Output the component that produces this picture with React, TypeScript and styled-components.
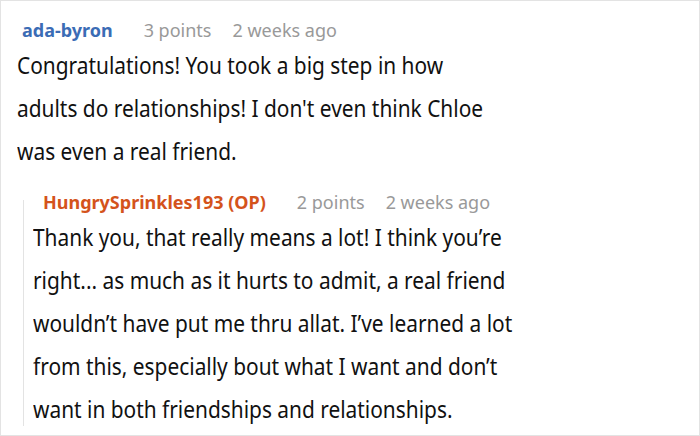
import styled, { createGlobalStyle } from "styled-components"

const GlobalStyle = createGlobalStyle`
	html, body {
		margin: 0;
		padding: 0;
		background: #fff;
	}
	body {
		font-family: "Noto Sans", "DejaVu Sans", sans-serif;
	}
`

type CommentData = {
	author: string
	op?: boolean
	points: number
	time: string
	text: string
}

const parent: CommentData = {
	author: "ada-byron",
	points: 3,
	time: "2 weeks ago",
	text: "Congratulations! You took a big step in how adults do relationships! I don't even think Chloe was even a real friend.",
}

const reply: CommentData = {
	author: "HungrySprinkles193 (OP)",
	op: true,
	points: 2,
	time: "2 weeks ago",
	text: "Thank you, that really means a lot! I think you’re right... as much as it hurts to admit, a real friend wouldn’t have put me thru allat. I’ve learned a lot from this, especially bout what I want and don’t want in both friendships and relationships.",
}

const App = () => {
	return (
		<>
			<GlobalStyle />
			<Frame>
				<Meta>
					<Author>{parent.author}</Author>
					<Info>{parent.points} points</Info>
					<Info>{parent.time}</Info>
				</Meta>
				<Body>{parent.text}</Body>
				<Reply>
					<Meta $indent={20}>
						<Author $op>{reply.author}</Author>
						<Info>{reply.points} points</Info>
						<Info>{reply.time}</Info>
					</Meta>
					<Body $indent={10}>{reply.text}</Body>
				</Reply>
			</Frame>
		</>
	)
}

const Frame = styled.div`
	box-sizing: border-box;
	width: 700px;
	height: 436px;
	border: 1px solid #e3e3e3;
	padding: 18px 20px 0 16px;
	overflow: hidden;
`

const Meta = styled.div<{ $indent?: number }>`
	display: flex;
	align-items: center;
	gap: 21px;
	height: 22px;
	padding-left: ${p => p.$indent ?? 5}px;
	font-size: 18px;
`

const Author = styled.span<{ $op?: boolean }>`
	font-weight: 700;
	color: ${p => (p.$op ? "#d4531c" : "#3b6cb5")};
	margin-right: 10px;
`

const Info = styled.span`
	color: #999;
`

// the comment text is set narrow, so squeeze it sideways
const Body = styled.div<{ $indent?: number }>`
	width: 556px;
	margin: 2px 0 0 ${p => p.$indent ?? 0}px;
	font-size: 24px;
	line-height: 43px;
	color: #111;
	transform: scaleX(0.87);
	transform-origin: left top;
`

const Reply = styled.div`
	position: relative;
	margin: 19px 0 0 6px;

	&::before {
		content: "";
		position: absolute;
		left: 0;
		top: 9px;
		height: 226px;
		border-left: 1px solid #e3e3e3;
	}
`

export default App
